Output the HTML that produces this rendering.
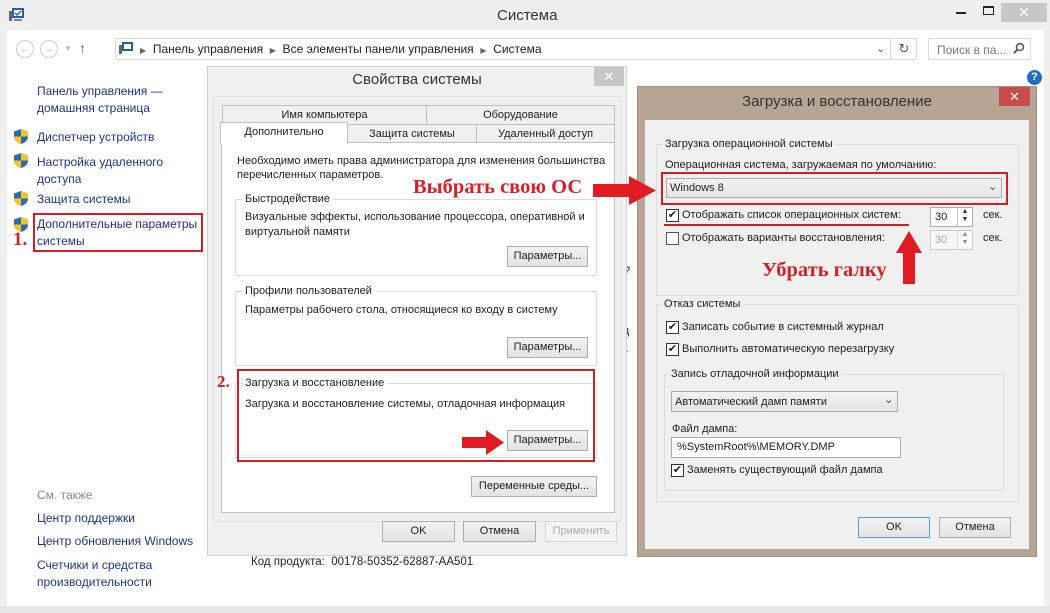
<!DOCTYPE html>
<html><head><meta charset="utf-8"><style>
*{box-sizing:border-box;margin:0;padding:0}
body{width:1050px;height:613px;overflow:hidden;background:#efefef;font-family:"Liberation Sans","DejaVu Sans",sans-serif;font-size:11px;color:#1e1e1e;position:relative}
.a{position:absolute;white-space:nowrap}
.btn{position:absolute;background:linear-gradient(#f2f2f2,#e3e3e3);border:1px solid #adadad;text-align:center;line-height:19px;font-size:11px}
.grp{position:absolute;border:1px solid #dcdcdc}
.grp>.t{position:absolute;top:-8px;left:6px;background:inherit;padding:0 3px;line-height:14px}
.cb{position:absolute;width:13px;height:13px;border:1px solid #333;background:#fff;font-size:11px;line-height:11px;text-align:center}
.red{color:#d61f26;font-family:"Liberation Serif",serif;font-weight:bold}
.nav{color:#1e3287;font-size:12px}
.shield{position:absolute;width:14px;height:15px}
</style></head><body>
<div class="a" style="left:0;top:0;width:1050px;height:30px;background:#efefef"></div>
<svg class="a" style="left:8px;top:7px" width="18" height="16"><rect x="4" y="1" width="12" height="10" fill="#2a5ca8"/><rect x="6" y="3" width="8" height="6" fill="#fff"/><path d="M7 6l2 2 4-4" stroke="#2a5ca8" fill="none" stroke-width="1.5"/><rect x="1" y="4" width="3" height="10" fill="#666"/><rect x="6" y="12" width="8" height="2" fill="#888"/></svg>
<div class="a" style="left:497px;top:7px;font-size:15px;color:#333">Система</div>
<div class="a" style="left:956px;top:12px;width:10px;height:2px;background:#222"></div>
<div class="a" style="left:983px;top:6px;width:11px;height:9px;border:1px solid #222;border-top-width:2px"></div>
<div class="a" style="left:1001px;top:3px;width:46px;height:19px;background:#c7c7c7;color:#fff;text-align:center;font-size:14px;line-height:19px">✕</div>
<div class="a" style="left:7px;top:30px;width:1037px;height:576px;background:#fff"></div>
<div class="a" style="left:0;top:606px;width:1050px;height:7px;background:#e6e6e6"></div>
<div class="a" style="left:16px;top:40px;width:18px;height:18px;border:1px solid #ccc;border-radius:50%;color:#bbb;text-align:center;line-height:16px;font-size:11px">←</div>
<div class="a" style="left:40px;top:40px;width:18px;height:18px;border:1px solid #ccc;border-radius:50%;color:#bbb;text-align:center;line-height:16px;font-size:11px">→</div>
<div class="a" style="left:64px;top:44px;color:#bbb;font-size:8px">▼</div>
<div class="a" style="left:79px;top:40px;font-size:14px;color:#555">↑</div>
<div class="a" style="left:115px;top:38px;width:802px;height:22px;border:1px solid #d9d9d9;background:#fff"></div>
<svg class="a" style="left:118px;top:41px" width="16" height="15"><rect x="4" y="1" width="11" height="9" fill="#2a5ca8"/><rect x="6" y="3" width="7" height="5" fill="#fff"/><rect x="1" y="4" width="3" height="9" fill="#666"/></svg>
<div class="a" style="left:140px;top:42px;font-size:12px"><span style="color:#666;font-size:8px">▶</span>&nbsp; Панель управления &nbsp;<span style="color:#666;font-size:8px">▶</span>&nbsp; Все элементы панели управления &nbsp;<span style="color:#666;font-size:8px">▶</span>&nbsp; Система</div>
<div class="a" style="left:876px;top:42px;color:#555;font-size:11px">⌄</div>
<div class="a" style="left:890px;top:38px;width:27px;height:22px;border-left:1px solid #d9d9d9;text-align:center;line-height:21px;color:#555;font-size:13px">↻</div>
<div class="a" style="left:928px;top:38px;width:103px;height:22px;border:1px solid #d9d9d9;color:#777;padding:4px 0 0 8px;font-size:12px">Поиск в па...</div>
<svg class="a" style="left:1013px;top:42px" width="12" height="13"><circle cx="7" cy="5" r="3.5" stroke="#555" fill="none" stroke-width="1.5"/><path d="M4.5 7.5L1 11" stroke="#555" stroke-width="2"/></svg>
<div class="a" style="left:1027px;top:70px;width:15px;height:15px;border-radius:50%;background:#1d6fc7;color:#fff;font-size:11px;font-weight:bold;text-align:center;line-height:15px">?</div>
<div class="a nav" style="left:37px;top:83px;line-height:17px">Панель управления —<br>домашняя страница</div>
<svg width="0" height="0" style="position:absolute"><defs><g id="sh"><path d="M7 0L14 2.5V8C14 11.5 10.5 14 7 15C3.5 14 0 11.5 0 8V2.5Z" fill="#2d6ab3"/><path d="M7 0V7.5H14V2.5Z M0 7.5H7V15C3.5 14 0 11.5 0 8Z" fill="#f3c624"/></g></defs></svg>
<svg class="shield" style="left:14px;top:129px"><use href="#sh"/></svg>
<svg class="shield" style="left:14px;top:153px"><use href="#sh"/></svg>
<svg class="shield" style="left:14px;top:191px"><use href="#sh"/></svg>
<svg class="shield" style="left:14px;top:217px"><use href="#sh"/></svg>
<div class="a nav" style="left:37px;top:130px">Диспетчер устройств</div>
<div class="a nav" style="left:37px;top:154px;line-height:17px">Настройка удаленного<br>доступа</div>
<div class="a nav" style="left:37px;top:192px">Защита системы</div>
<div class="a nav" style="left:37px;top:216px;line-height:17px">Дополнительные параметры<br>системы</div>
<div class="a" style="left:33px;top:213px;width:170px;height:39px;border:2px solid #d11f2a"></div>
<div class="a red" style="left:13px;top:229px;font-size:19px">1.</div>
<div class="a" style="left:37px;top:488px;color:#888;font-size:12px">См. также</div>
<div class="a nav" style="left:37px;top:511px">Центр поддержки</div>
<div class="a nav" style="left:37px;top:534px">Центр обновления Windows</div>
<div class="a nav" style="left:37px;top:557px;line-height:17px">Счетчики и средства<br>производительности</div>
<div class="a" style="left:251px;top:556px;font-size:11.5px">Код продукта:&nbsp; 00178-50352-62887-AA501</div>
<div class="a" style="left:624px;top:265px">?</div>
<div class="a" style="left:623px;top:325px">ц</div>
<div class="a" style="left:623px;top:348px">т</div>
<div class="a" style="left:207px;top:66px;width:420px;height:490px;background:#f0f0f0;border:1px solid #d0d0d0"></div>
<div class="a" style="left:207px;top:71px;width:420px;text-align:center;font-size:15px;color:#333">Свойства системы</div>
<div class="a" style="left:594px;top:67px;width:30px;height:19px;background:#c7c7c7;color:#fff;text-align:center;line-height:19px;font-size:13px">✕</div>
<div class="a" style="left:213px;top:96px;width:408px;height:426px;border:1px solid #e0e0e0"></div>
<div class="a" style="left:222px;top:105px;width:205px;height:20px;border:1px solid #c0c0c0;background:#f0f0f0;text-align:center;line-height:18px">Имя компьютера</div>
<div class="a" style="left:426px;top:105px;width:189px;height:20px;border:1px solid #c0c0c0;background:#f0f0f0;text-align:center;line-height:18px">Оборудование</div>
<div class="a" style="left:347px;top:124px;width:130px;height:19px;border:1px solid #c0c0c0;background:#f0f0f0;text-align:center;line-height:18px">Защита системы</div>
<div class="a" style="left:476px;top:124px;width:139px;height:19px;border:1px solid #c0c0c0;background:#f0f0f0;text-align:center;line-height:18px">Удаленный доступ</div>
<div class="a" style="left:221px;top:142px;width:394px;height:371px;background:#fff;border:1px solid #c0c0c0"></div>
<div class="a" style="left:220px;top:122px;width:128px;height:22px;background:#fff;border:1px solid #c0c0c0;border-bottom:none;text-align:center;line-height:18px">Дополнительно</div>
<div class="a" style="left:237px;top:154px;line-height:14px">Необходимо иметь права администратора для изменения большинства<br>перечисленных параметров.</div>
<div class="grp" style="left:235px;top:199px;width:362px;height:77px;background:#fff"><span class="t">Быстродействие</span></div>
<div class="a" style="left:245px;top:210px;line-height:15px">Визуальные эффекты, использование процессора, оперативной и<br>виртуальной памяти</div>
<div class="btn" style="left:507px;top:246px;width:81px;height:21px">Параметры...</div>
<div class="grp" style="left:235px;top:291px;width:362px;height:75px;background:#fff"><span class="t">Профили пользователей</span></div>
<div class="a" style="left:245px;top:304px">Параметры рабочего стола, относящиеся ко входу в систему</div>
<div class="btn" style="left:507px;top:337px;width:81px;height:21px">Параметры...</div>
<div class="grp" style="left:235px;top:383px;width:362px;height:75px;background:#fff"><span class="t">Загрузка и восстановление</span></div>
<div class="a" style="left:245px;top:398px">Загрузка и восстановление системы, отладочная информация</div>
<div class="btn" style="left:507px;top:430px;width:81px;height:21px">Параметры...</div>
<div class="a" style="left:237px;top:369px;width:358px;height:93px;border:2px solid #d11f2a"></div>
<div class="a red" style="left:217px;top:372px;font-size:17px">2.</div>
<svg class="a" style="left:462px;top:430px" width="44" height="25"><path d="M0 7H24V0L42 12.5L24 25V18H0Z" fill="#e01b22"/></svg>
<div class="btn" style="left:471px;top:476px;width:126px;height:21px">Переменные среды...</div>
<div class="btn" style="left:382px;top:521px;width:73px;height:21px">OK</div>
<div class="btn" style="left:463px;top:521px;width:73px;height:21px">Отмена</div>
<div class="btn" style="left:545px;top:521px;width:72px;height:21px;color:#aaa;border-color:#d5d5d5;background:#f4f4f4">Применить</div>
<div class="a" style="left:637px;top:86px;width:400px;height:471px;background:#b6a595;border:1px solid #a39282"></div>
<div class="a" style="left:637px;top:93px;width:400px;text-align:center;font-size:15px;color:#333">Загрузка и восстановление</div>
<div class="a" style="left:999px;top:87px;width:31px;height:19px;background:#c94b4b;color:#fff;text-align:center;line-height:19px;font-size:13px">✕</div>
<div class="a" style="left:645px;top:120px;width:384px;height:429px;background:#f0f0f0"></div>
<div class="grp" style="left:656px;top:144px;width:363px;height:152px;background:#f0f0f0;border-color:#dcdcdc"><span class="t" style="top:-8px;left:5px">Загрузка операционной системы</span></div>
<div class="a" style="left:665px;top:159px">Операционная система, загружаемая по умолчанию:</div>
<div class="a" style="left:666px;top:178px;width:336px;height:20px;border:1px solid #acacac;background:linear-gradient(#f2f2f2,#e5e5e5);padding:3px 0 0 3px">Windows 8</div>
<div class="a" style="left:988px;top:180px;color:#444;font-size:11px">⌄</div>
<div class="a" style="left:661px;top:172px;width:347px;height:33px;border:2px solid #d11f2a"></div>
<div class="cb" style="left:666px;top:209px">✔</div>
<div class="a" style="left:682px;top:209px">Отображать список операционных систем:</div>
<div class="a" style="left:664px;top:224px;width:245px;height:2px;background:#d11f2a"></div>
<div class="a" style="left:930px;top:207px;width:43px;height:20px;border:1px solid #acacac;background:#fff;padding:3px 0 0 4px">30</div>
<div class="a" style="left:957px;top:208px;width:15px;height:18px;border-left:1px solid #ccc;font-size:7px;text-align:center;line-height:8px;color:#333">▲<br>▼</div>
<div class="a" style="left:983px;top:209px">сек.</div>
<div class="cb" style="left:666px;top:232px;border-color:#555"></div>
<div class="a" style="left:682px;top:232px">Отображать варианты восстановления:</div>
<div class="a" style="left:930px;top:230px;width:43px;height:20px;border:1px solid #ccc;background:#f7f7f7;padding:3px 0 0 4px;color:#aaa">30</div>
<div class="a" style="left:957px;top:231px;width:15px;height:18px;border-left:1px solid #ddd;font-size:7px;text-align:center;line-height:8px;color:#888">▲<br>▼</div>
<div class="a" style="left:983px;top:232px">сек.</div>
<div class="grp" style="left:656px;top:304px;width:363px;height:198px;background:#f0f0f0"><span class="t" style="left:4px">Отказ системы</span></div>
<div class="cb" style="left:666px;top:321px">✔</div>
<div class="a" style="left:682px;top:321px">Записать событие в системный журнал</div>
<div class="cb" style="left:666px;top:343px">✔</div>
<div class="a" style="left:682px;top:343px">Выполнить автоматическую перезагрузку</div>
<div class="grp" style="left:664px;top:374px;width:340px;height:117px;background:#f0f0f0"><span class="t" style="left:3px">Запись отладочной информации</span></div>
<div class="a" style="left:671px;top:391px;width:227px;height:21px;border:1px solid #acacac;background:linear-gradient(#f2f2f2,#e5e5e5);padding:4px 0 0 3px">Автоматический дамп памяти</div>
<div class="a" style="left:884px;top:393px;color:#444;font-size:11px">⌄</div>
<div class="a" style="left:672px;top:423px">Файл дампа:</div>
<div class="a" style="left:671px;top:437px;width:230px;height:21px;border:1px solid #acacac;background:#fff;padding:3px 0 0 5px">%SystemRoot%\MEMORY.DMP</div>
<div class="cb" style="left:671px;top:464px">✔</div>
<div class="a" style="left:687px;top:464px">Заменять существующий файл дампа</div>
<div class="btn" style="left:858px;top:517px;width:72px;height:21px;border-color:#5e9ad8">OK</div>
<div class="btn" style="left:939px;top:517px;width:72px;height:21px">Отмена</div>
<div class="a red" style="left:413px;top:176px;font-size:20.5px">Выбрать свою ОС</div>
<svg class="a" style="left:593px;top:176px" width="64" height="29"><path d="M0 8H36V0L63 14.5L36 29V21H0Z" fill="#e01b22"/></svg>
<div class="a red" style="left:762px;top:259px;font-size:20.5px">Убрать галку</div>
<svg class="a" style="left:896px;top:231px" width="26" height="53"><path d="M13 0L26 22H19V53H7V22H0Z" fill="#e01b22"/></svg>
</body></html>
